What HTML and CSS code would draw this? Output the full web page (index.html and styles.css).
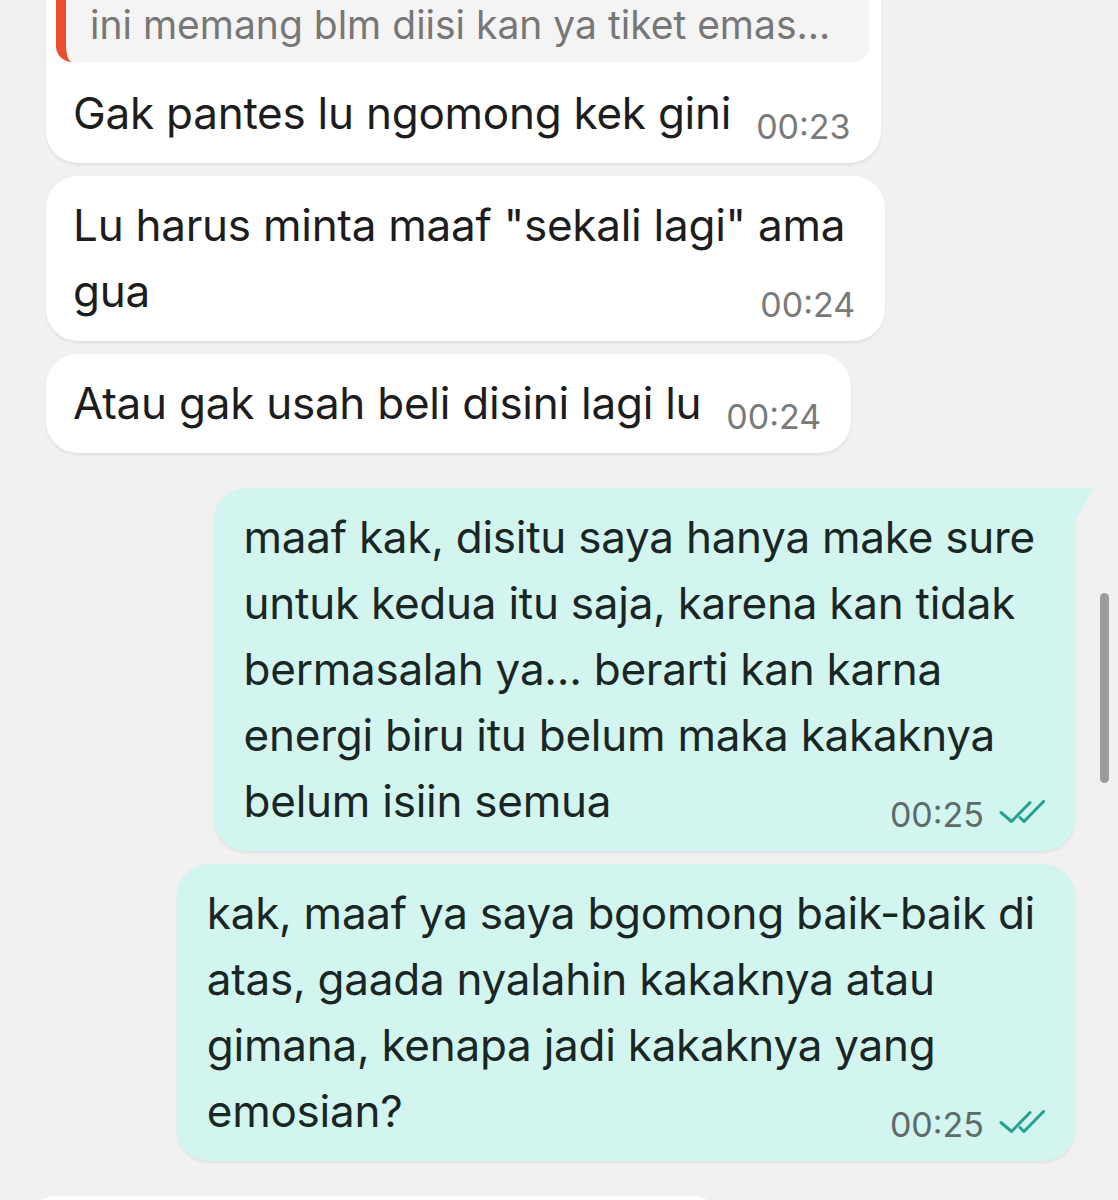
FILE: index.html
```html
<!DOCTYPE html>
<html lang="id">
<head>
<meta charset="utf-8">
<title>Chat</title>
<link rel="stylesheet" href="styles.css">
</head>
<body>
<div class="chat">
  <div class="row in">
    <div class="bubble in">
      <div class="quote">ini memang blm diisi kan ya tiket emas...</div>
      <span class="text">Gak pantes lu ngomong kek gini</span><span class="meta"><span class="time">00:23</span></span>
    </div>
  </div>
  <div class="row in">
    <div class="bubble in">
      <span class="text">Lu harus minta maaf "sekali lagi" ama<br>gua</span><span class="meta"><span class="time">00:24</span></span>
    </div>
  </div>
  <div class="row in">
    <div class="bubble in">
      <span class="text">Atau gak usah beli disini lagi lu</span><span class="meta"><span class="time">00:24</span></span>
    </div>
  </div>

  <div class="row out group">
    <div class="bubble out tail">
      <span class="text">maaf kak, disitu saya hanya make sure<br>untuk kedua itu saja, karena kan tidak<br>bermasalah ya... berarti kan karna<br>energi biru itu belum maka kakaknya<br>belum isiin semua</span><span class="meta"><span class="time">00:25</span><svg class="ticks" viewBox="0 0 46 24" width="46" height="24"><path d="M2 12.5 L12.5 21.5 L31 2.5" /><path d="M21 17.5 L25 21.5 L44.5 1.5" /></svg></span>
    </div>
  </div>
  <div class="row out">
    <div class="bubble out">
      <span class="text">kak, maaf ya saya bgomong baik-baik di<br>atas, gaada nyalahin kakaknya atau<br>gimana, kenapa jadi kakaknya yang<br>emosian?</span><span class="meta"><span class="time">00:25</span><svg class="ticks" viewBox="0 0 46 24" width="46" height="24"><path d="M2 12.5 L12.5 21.5 L31 2.5" /><path d="M21 17.5 L25 21.5 L44.5 1.5" /></svg></span>
    </div>
  </div>

  <div class="row in group">
    <div class="bubble in next"></div>
  </div>
</div>
<div class="scrollbar"></div>
</body>
</html>
```

FILE: styles.css
```css
html, body {
  margin: 0;
  padding: 0;
  background: #f2f1f1;
  overflow: hidden;
}

body {
  font-family: Inter, "Noto Sans", "Liberation Sans", sans-serif;
  color: #1c1c1c;
}

.chat {
  display: flex;
  flex-direction: column;
  gap: 13px;
  margin-top: -21px;
  padding: 0 43px 0 46px;
}

.row {
  display: flex;
}

.row.in {
  justify-content: flex-start;
}

.row.out {
  justify-content: flex-end;
}

.row.group {
  margin-top: 22px;
}

.bubble {
  position: relative;
  border-radius: 32px;
  padding: 16px 40px 16px 27px;
  font-size: 44px;
  line-height: 66px;
  letter-spacing: -0.25px;
  box-shadow: 0 2px 3px rgba(0, 0, 0, 0.07);
}

.bubble.in {
  background: #ffffff;
  color: #1d1d1d;
}

.bubble.out {
  background: #d3f5f0;
  color: #1a2624;
  padding-left: 30px;
}

.bubble.tail {
  border-top-right-radius: 0;
}

.bubble.tail::after {
  content: "";
  position: absolute;
  top: 0;
  right: -18px;
  width: 18px;
  height: 34px;
  background: #d3f5f0;
  clip-path: polygon(0 0, 100% 0, 96% 8%, 0 100%);
}

.bubble.next {
  margin-left: -22px;
  width: 700px;
  height: 100px;
  padding: 0;
  box-shadow: none;
}

.bubble:has(.quote) {
  padding-top: 10px;
  padding-left: 10px;
  border-top-left-radius: 16px;
  border-top-right-radius: 16px;
}

.bubble:has(.quote) .text {
  margin-left: 17px;
}

.quote {
  background: #f4f4f4;
  border-left: 10px solid #ee4d2d;
  border-radius: 6px 16px 16px 16px;
  padding: 14px 24px 15px 24px;
  margin-right: -28px;
  margin-bottom: 18px;
  font-size: 39px;
  line-height: 44px;
  letter-spacing: 0;
  color: #777777;
  white-space: nowrap;
}

.text {
  white-space: nowrap;
}

.meta {
  float: right;
  display: flex;
  align-items: center;
  gap: 15px;
  margin: 27px -10px 0 25px;
  height: 40px;
  letter-spacing: 0;
}

.time {
  font-size: 34px;
  line-height: 40px;
  color: #7a7a7a;
}

.bubble.out .time {
  color: #5d6b69;
}

.ticks {
  display: block;
  fill: none;
  stroke: #26a08f;
  stroke-width: 3;
  stroke-linecap: round;
  stroke-linejoin: round;
  margin-top: -6px;
}

.scrollbar {
  position: fixed;
  left: 1100px;
  top: 593px;
  width: 9px;
  height: 190px;
  border-radius: 5px;
  background: #9c9c9c;
}
```
